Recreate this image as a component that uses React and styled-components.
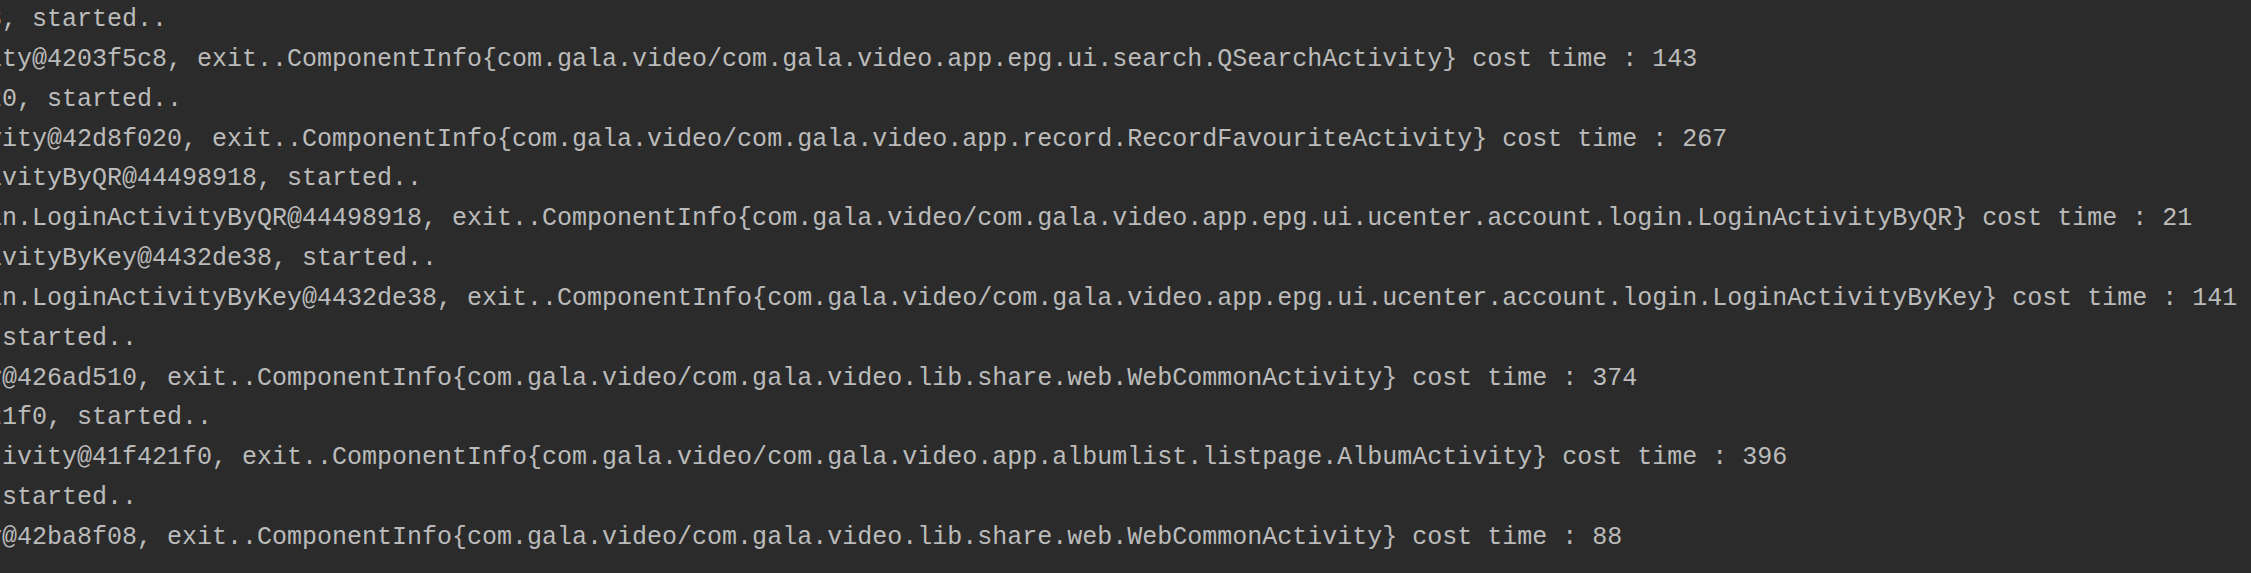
import React from "react";
import styled, { createGlobalStyle } from "styled-components";

const GlobalStyle = createGlobalStyle`
  html, body {
    margin: 0;
    padding: 0;
    background: #2b2b2b;
    overflow: hidden;
  }
  #root {
    width: 2251px;
    height: 573px;
  }
`;

const Console = styled.div`
  width: 2251px;
  height: 573px;
  background: #2b2b2b;
  overflow: hidden;
`;

const Output = styled.div`
  margin-left: -13px;
  display: flex;
  flex-direction: column;
  font-family: "Liberation Mono", "DejaVu Sans Mono", monospace;
  font-size: 25px;
  line-height: 39.85px;
  color: #bbbbbb;
  white-space: pre;
`;

const Line = styled.div`
  height: 39.85px;
`;

const lines = [
  "3, started..",
  "ity@4203f5c8, exit..ComponentInfo{com.gala.video/com.gala.video.app.epg.ui.search.QSearchActivity} cost time : 143",
  "20, started..",
  "vity@42d8f020, exit..ComponentInfo{com.gala.video/com.gala.video.app.record.RecordFavouriteActivity} cost time : 267",
  "ivityByQR@44498918, started..",
  "in.LoginActivityByQR@44498918, exit..ComponentInfo{com.gala.video/com.gala.video.app.epg.ui.ucenter.account.login.LoginActivityByQR} cost time : 21",
  "ivityByKey@4432de38, started..",
  "in.LoginActivityByKey@4432de38, exit..ComponentInfo{com.gala.video/com.gala.video.app.epg.ui.ucenter.account.login.LoginActivityByKey} cost time : 141",
  " started..",
  "y@426ad510, exit..ComponentInfo{com.gala.video/com.gala.video.lib.share.web.WebCommonActivity} cost time : 374",
  "21f0, started..",
  "tivity@41f421f0, exit..ComponentInfo{com.gala.video/com.gala.video.app.albumlist.listpage.AlbumActivity} cost time : 396",
  " started..",
  "y@42ba8f08, exit..ComponentInfo{com.gala.video/com.gala.video.lib.share.web.WebCommonActivity} cost time : 88",
];

export default function App() {
  return (
    <>
      <GlobalStyle />
      <Console>
        <Output>
          {lines.map((text, i) => (
            <Line key={i}>{text}</Line>
          ))}
        </Output>
      </Console>
    </>
  );
}
